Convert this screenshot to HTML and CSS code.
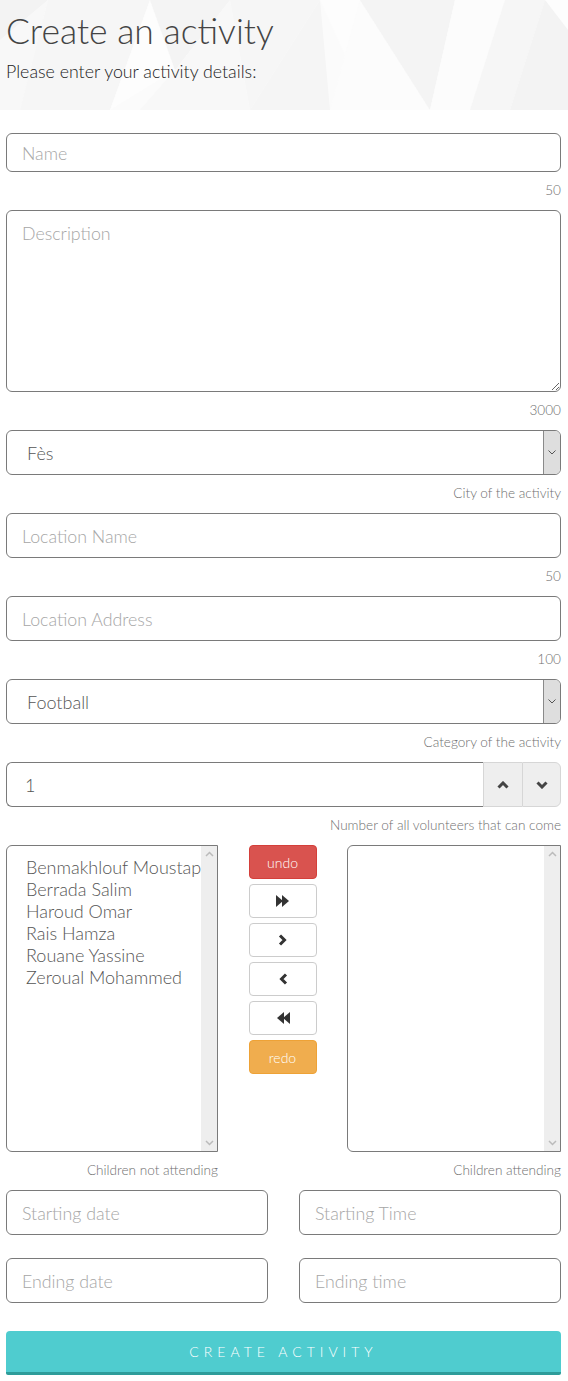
FILE: index.html
```html
<!DOCTYPE html>
<html lang="en">
<head>
<meta charset="utf-8">
<title>Create an activity</title>
<link rel="stylesheet" href="styles.css">
</head>
<body>
<div class="page">
  <header class="hero">
    <svg class="hero-bg" viewBox="0 0 568 110" preserveAspectRatio="none" aria-hidden="true">
      <rect width="568" height="110" fill="#fbfbfb"/>
      <polygon points="0,0 48,0 0,40" fill="#f3f3f3"/>
      <polygon points="0,40 48,0 20,110 0,110" fill="#f8f8f8"/>
      <polygon points="48,0 150,0 110,110 20,110" fill="#f6f6f6"/>
      <polygon points="110,110 150,0 175,70" fill="#fdfdfd"/>
      <polygon points="150,0 230,0 175,70" fill="#f4f4f4"/>
      <polygon points="175,70 230,0 250,110 140,110" fill="#f8f8f8"/>
      <polygon points="230,0 320,0 250,110" fill="#f6f6f6"/>
      <polygon points="250,110 320,0 330,110" fill="#f5f5f5"/>
      <polygon points="320,0 360,0 345,55" fill="#fdfdfd"/>
      <polygon points="345,55 360,0 430,110 330,110" fill="#fcfcfc"/>
      <polygon points="360,0 455,0 430,110" fill="#f4f4f4"/>
      <polygon points="455,0 505,0 470,110 430,110" fill="#fcfcfc"/>
      <polygon points="505,0 545,0 510,110 470,110" fill="#f6f6f6"/>
      <polygon points="545,0 568,0 568,30" fill="#fdfdfd"/>
      <polygon points="545,0 568,30 568,110 510,110" fill="#f3f3f3"/>
    </svg>
    <h1 class="title">Create an activity</h1>
    <p class="subtitle">Please enter your activity details:</p>
  </header>

  <form class="form">
    <input class="field field-short" type="text" placeholder="Name">
    <div class="hint">50</div>

    <textarea class="field field-area" placeholder="Description"></textarea>
    <div class="hint">3000</div>

    <div class="select">
      <span class="select-value">Fès</span>
      <span class="select-arrow"><svg width="8" height="5" viewBox="0 0 8 5"><polyline points="0.5,0.5 4,4 7.5,0.5" fill="none" stroke="#555" stroke-width="1"/></svg></span>
    </div>
    <div class="hint">City of the activity</div>

    <input class="field" type="text" placeholder="Location Name">
    <div class="hint">50</div>

    <input class="field" type="text" placeholder="Location Address">
    <div class="hint">100</div>

    <div class="select">
      <span class="select-value">Football</span>
      <span class="select-arrow"><svg width="8" height="5" viewBox="0 0 8 5"><polyline points="0.5,0.5 4,4 7.5,0.5" fill="none" stroke="#555" stroke-width="1"/></svg></span>
    </div>
    <div class="hint">Category of the activity</div>

    <div class="spinner">
      <span class="spinner-value">1</span>
      <button type="button" class="spin-btn"><svg width="12" height="8" viewBox="0 0 12 8"><polyline points="1.5,6.5 6,2 10.5,6.5" fill="none" stroke="#444" stroke-width="3"/></svg></button>
      <button type="button" class="spin-btn spin-last"><svg width="12" height="8" viewBox="0 0 12 8"><polyline points="1.5,1.5 6,6 10.5,1.5" fill="none" stroke="#444" stroke-width="3"/></svg></button>
    </div>
    <div class="hint">Number of all volunteers that can come</div>

    <div class="dual">
      <div class="listbox">
        <ul class="list-items">
          <li>Benmakhlouf Moustapha</li>
          <li>Berrada Salim</li>
          <li>Haroud Omar</li>
          <li>Rais Hamza</li>
          <li>Rouane Yassine</li>
          <li>Zeroual Mohammed</li>
        </ul>
        <div class="scrollbar">
          <svg width="9" height="6" viewBox="0 0 9 6"><polyline points="1,5 4.5,1.5 8,5" fill="none" stroke="#bbb" stroke-width="1.5"/></svg>
          <svg width="9" height="6" viewBox="0 0 9 6"><polyline points="1,1 4.5,4.5 8,1" fill="none" stroke="#bbb" stroke-width="1.5"/></svg>
        </div>
      </div>

      <div class="controls">
        <button type="button" class="ctl ctl-undo">undo</button>
        <button type="button" class="ctl"><svg width="14" height="12" viewBox="0 0 14 12"><polygon points="0,0 7,6 0,12" fill="#333"/><polygon points="6,0 13,6 6,12" fill="#333"/></svg></button>
        <button type="button" class="ctl"><svg width="10" height="12" viewBox="0 0 10 12"><polyline points="2,1.5 6.5,6 2,10.5" fill="none" stroke="#333" stroke-width="3"/></svg></button>
        <button type="button" class="ctl"><svg width="10" height="12" viewBox="0 0 10 12"><polyline points="8,1.5 3.5,6 8,10.5" fill="none" stroke="#333" stroke-width="3"/></svg></button>
        <button type="button" class="ctl"><svg width="14" height="12" viewBox="0 0 14 12"><polygon points="14,0 7,6 14,12" fill="#333"/><polygon points="8,0 1,6 8,12" fill="#333"/></svg></button>
        <button type="button" class="ctl ctl-redo">redo</button>
      </div>

      <div class="listbox">
        <ul class="list-items"></ul>
        <div class="scrollbar">
          <svg width="9" height="6" viewBox="0 0 9 6"><polyline points="1,5 4.5,1.5 8,5" fill="none" stroke="#bbb" stroke-width="1.5"/></svg>
          <svg width="9" height="6" viewBox="0 0 9 6"><polyline points="1,1 4.5,4.5 8,1" fill="none" stroke="#bbb" stroke-width="1.5"/></svg>
        </div>
      </div>

      <div class="hint hint-col">Children not attending</div>
      <div></div>
      <div class="hint hint-col">Children attending</div>
    </div>

    <div class="pair">
      <input class="field" type="text" placeholder="Starting date">
      <input class="field" type="text" placeholder="Starting Time">
    </div>
    <div class="pair pair-second">
      <input class="field" type="text" placeholder="Ending date">
      <input class="field" type="text" placeholder="Ending time">
    </div>

    <button type="button" class="submit">Create activity</button>
  </form>
</div>
</body>
</html>
```

FILE: styles.css
```css
* {
  box-sizing: border-box;
}

body {
  margin: 0;
  background: #fff;
  font-family: "Lato Light", Lato, "Open Sans", "Liberation Sans", sans-serif;
  font-weight: 300;
  color: #555;
}

.page {
  padding: 0 7px 6px 6px;
}

.hero {
  position: relative;
  height: 110px;
  margin: 0 -7px 23px -6px;
  padding: 0 6px;
  overflow: hidden;
}

.hero-bg {
  position: absolute;
  left: 0;
  top: 0;
  width: 100%;
  height: 100%;
}

.title {
  position: relative;
  margin: 0;
  padding-top: 11px;
  font-size: 35.5px;
  font-weight: 300;
  line-height: 39.6px;
  color: #444;
}

.subtitle {
  position: relative;
  margin: 10px 0 0;
  font-size: 17.8px;
  font-weight: 300;
  line-height: 20px;
  color: #222;
}

.form {
  display: flex;
  flex-direction: column;
}

.field {
  display: block;
  width: 100%;
  height: 45px;
  margin: 0;
  padding: 0 15px;
  border: 1px solid #7a7a7a;
  border-radius: 6px;
  background: #fff;
  font-family: inherit;
  font-weight: 300;
  font-size: 17.8px;
  color: #555;
  outline: none;
}

.field::placeholder {
  color: #a6a6a6;
  opacity: 1;
}

.field-short {
  height: 39px;
}

.field-area {
  height: 182px;
  padding: 11px 15px;
  resize: vertical;
}

.hint {
  padding: 9px 0 11px;
  font-size: 13.6px;
  line-height: 18px;
  text-align: right;
  color: #707070;
}

.select {
  display: flex;
  align-items: stretch;
  height: 45px;
  border: 1px solid #7a7a7a;
  border-radius: 6px;
  background: #fff;
  overflow: hidden;
}

.select-value {
  flex: 1;
  display: flex;
  align-items: center;
  padding-left: 20px;
  font-size: 18px;
  color: #555;
}

.select-arrow {
  width: 17px;
  display: flex;
  align-items: center;
  justify-content: center;
  background: #dedede;
  border-left: 1px solid #8a8a8a;
}

.spinner {
  display: flex;
  height: 45px;
}

.spinner-value {
  flex: 1;
  display: flex;
  align-items: center;
  padding-left: 18px;
  font-size: 18px;
  color: #555;
  border: 1px solid #7a7a7a;
  border-right: none;
  border-radius: 6px 0 0 6px;
}

.spin-btn {
  width: 39px;
  display: flex;
  align-items: center;
  justify-content: center;
  margin: 0;
  padding: 0;
  background: #eee;
  border: 1px solid #d6d6d6;
  border-right: none;
}

.spin-last {
  border-right: 1px solid #d6d6d6;
  border-radius: 0 6px 6px 0;
}

.dual {
  display: grid;
  grid-template-columns: 212px 1fr 214px;
}

.listbox {
  display: flex;
  height: 307px;
  border: 1px solid #7a7a7a;
  border-radius: 6px 0 0 6px;
  overflow: hidden;
  background: #fff;
}

.list-items {
  flex: 1;
  min-width: 0;
  margin: 0;
  padding: 10px 0 0 19px;
  list-style: none;
  overflow: hidden;
}

.list-items li {
  font-size: 18px;
  line-height: 22px;
  white-space: nowrap;
  color: #555;
}

.scrollbar {
  width: 16px;
  display: flex;
  flex-direction: column;
  justify-content: space-between;
  align-items: center;
  padding: 5px 0 5px;
  background: #eeeeee;
}

.controls {
  display: flex;
  flex-direction: column;
  align-items: center;
  gap: 5px;
}

.ctl {
  width: 68px;
  height: 34px;
  margin: 0;
  padding: 0;
  display: flex;
  align-items: center;
  justify-content: center;
  border: 1px solid #ccc;
  border-radius: 4px;
  background: #fff;
  font-family: inherit;
  font-weight: 400;
  font-size: 14px;
  color: #fff;
}

.ctl-undo {
  background: #d9534f;
  border-color: #d43f3a;
}

.ctl-redo {
  background: #f0ad4e;
  border-color: #eea236;
}

.hint-col {
  text-align: right;
}

.pair {
  display: grid;
  grid-template-columns: 1fr 1fr;
  column-gap: 31px;
}

.pair-second {
  margin-top: 23px;
}

.submit {
  margin: 28px 0 0;
  height: 44px;
  padding: 0;
  border: none;
  border-bottom: 3px solid #2e9c9a;
  border-radius: 4px 4px 2px 2px;
  background: #4fcccf;
  font-family: inherit;
  font-size: 14px;
  font-weight: 300;
  letter-spacing: 5px;
  text-transform: uppercase;
  color: #fff;
}
```
